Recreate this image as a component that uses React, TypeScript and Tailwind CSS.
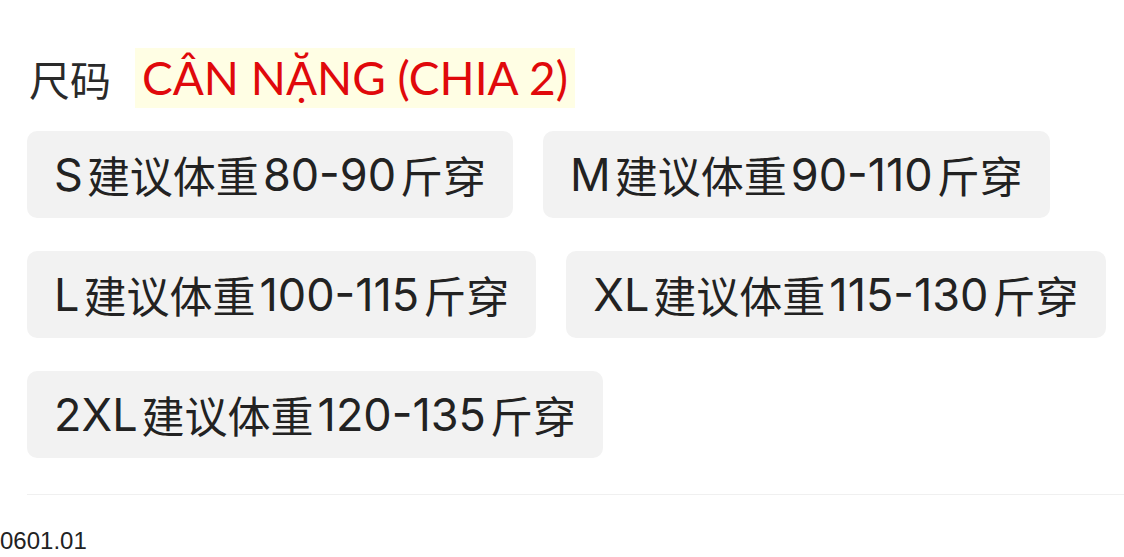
const rows = [
  [
    ["S", "80-90"],
    ["M", "90-110"],
  ],
  [
    ["L", "100-115"],
    ["XL", "115-130"],
  ],
  [["2XL", "120-135"]],
];

const latin = { fontFamily: 'Inter, "Liberation Sans", sans-serif' };

function Chip({ size, range }: { size: string; range: string }) {
  return (
    <div className="flex h-[87px] items-center rounded-[10px] bg-[#f2f2f2] px-[27px] text-[43px] leading-none text-[#222]">
      <span className="text-[45px]" style={latin}>
        {size}
      </span>
      <span className="ml-[4px]">建议体重</span>
      <span className="ml-[4px] text-[45px]" style={latin}>
        {range}
      </span>
      <span className="ml-[4px]">斤穿</span>
    </div>
  );
}

export default function App() {
  return (
    <div
      className="h-[557px] w-[1124px] overflow-hidden bg-white"
      style={{ fontFamily: '"Noto Sans CJK SC", sans-serif' }}
    >
      <div className="flex items-center pl-[29px] pt-[48px]">
        <span className="text-[41px] leading-none text-[#2a2a2a]">尺码</span>
        <span
          className="ml-[24px] flex h-[60px] items-center bg-[#fffee4] px-[7px] text-[46px] leading-none text-[#e0090b]"
          style={{ fontFamily: 'Lato, sans-serif' }}
        >
          CÂN NẶNG (CHIA 2)
        </span>
      </div>
      <div className="mt-[23px] flex flex-col gap-[33px] pl-[27px]">
        {rows.map((row, i) => (
          <div key={i} className="flex gap-[30px]">
            {row.map(([s, r]) => (
              <Chip key={s} size={s} range={r} />
            ))}
          </div>
        ))}
      </div>
      <div className="ml-[27px] mt-[36px] h-px bg-[#f0f0f0]" />
      <div className="mt-[34px] text-[24px] leading-none text-[#222]" style={{ fontFamily: '"Liberation Sans", sans-serif' }}>
        0601.01
      </div>
    </div>
  );
}
